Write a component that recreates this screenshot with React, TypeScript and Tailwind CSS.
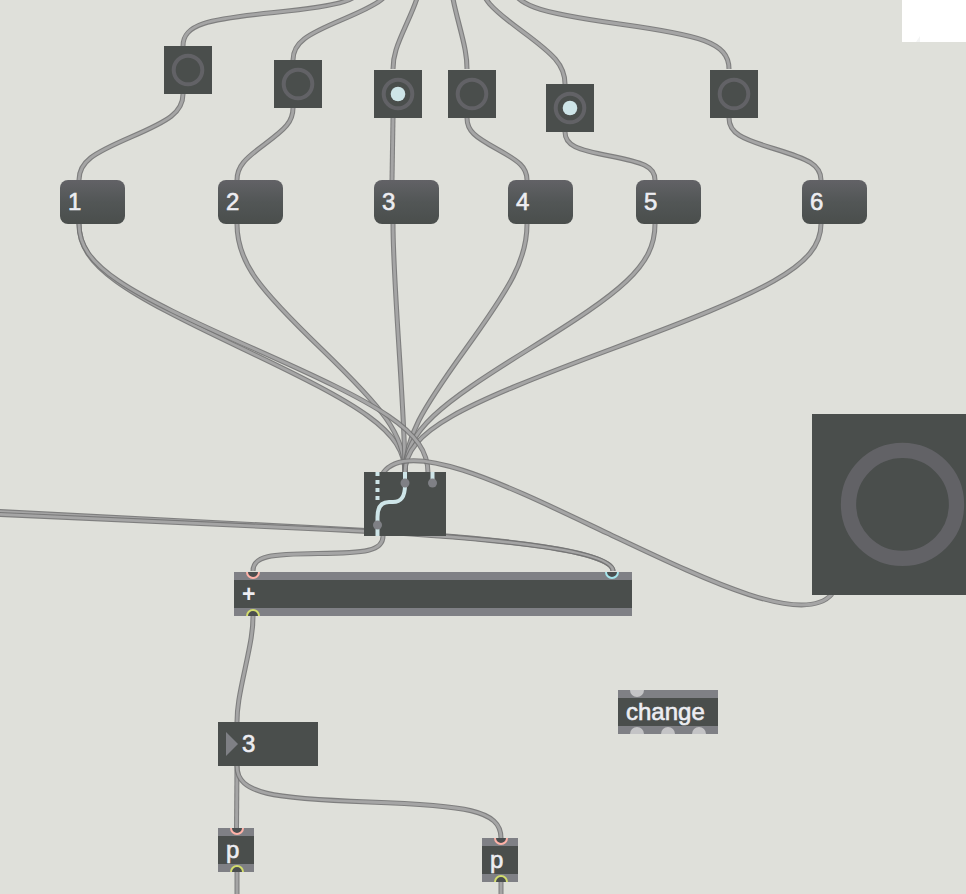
type Point = [number, number];

// Patch cords leave and enter vertically, rounding a corner toward their midpoint.
function cord([x0, y0]: Point, [x1, y1]: Point) {
  const sag = Math.min(47, 3 + 0.077 * Math.abs(x1 - x0) + 0.11 * (y1 - y0));
  const mx = (x0 + x1) / 2;
  const my = (y0 + y1) / 2;
  const handle = sag * 0.9;
  const bend = 0.27;
  const bx = (mx - x0) * bend;
  const by = sag + (my - y0 - sag) * bend;
  return `M${x0} ${y0} C${x0} ${y0 + handle} ${x0 + bx} ${y0 + by} ${mx} ${my} C${x1 - bx} ${y1 - by} ${x1} ${y1 - handle} ${x1} ${y1}`;
}

const cords: string[] = [
  cord([365, -21], [183, 46]),
  cord([392, -21], [293, 60]),
  cord([420, -21], [393, 69]),
  cord([451, -21], [467, 69]),
  cord([480, -21], [565, 84]),
  cord([510, -21], [729, 69]),
  cord([183, 94], [79, 180]),
  cord([293, 108], [237, 180]),
  "M393 118 L392 180",
  cord([467, 118], [527, 180]),
  cord([565, 132], [655, 180]),
  cord([729, 118], [821, 180]),
  cord([79, 224], [405, 473]),
  cord([237, 224], [405, 473]),
  cord([393, 224], [405, 473]),
  cord([527, 224], [405, 473]),
  cord([655, 224], [405, 473]),
  cord([821, 224], [405, 473]),
  cord([79, 224], [428, 473]),
  "M832 594 C803 628 700 577 607 533 S409 436 383 473",
  "M-20 510.5 L330 528.5 Q613 543 613 571",
  "M-20 513.5 L330 529.5 Q613 543 613 571",
  cord([383, 536], [253, 571]),
  cord([253, 616], [237, 722]),
  "M237 766 L236.5 828",
  cord([237, 766], [501, 838]),
  "M237 872 V900",
  "M501 882 V900",
];

function Cords() {
  return (
    <svg className="absolute inset-0" width="966" height="894" fill="none">
      {cords.map((d, i) => (
        <g key={i}>
          <path d={d} stroke="#747474" strokeWidth="5" strokeOpacity="0.9" />
          <path d={d} stroke="#a8a8a8" strokeWidth="2.8" strokeOpacity="0.95" />
        </g>
      ))}
    </svg>
  );
}

function Bang({ place, lit = false }: { place: string; lit?: boolean }) {
  return (
    <div className={`absolute size-12 bg-[#4a4e4c] ${place}`}>
      <svg className="block size-12" fill="none">
        <circle cx="24" cy="24" r="14.3" stroke="#626266" strokeWidth="4" />
        {lit && <circle cx="24" cy="24" r="7.3" fill="#cee5e8" />}
      </svg>
    </div>
  );
}

function Message({ place, text }: { place: string; text: string }) {
  return (
    <div
      className={`absolute flex h-11 w-[65px] items-center rounded-[8px] bg-linear-to-b from-[#626266] via-[#525656] to-[#4a4e4c] pl-2 ${place}`}
    >
      {text}
    </div>
  );
}

const portColors = { hot: "#ffb2a8", cold: "#a5e5ec", out: "#d3dd6c", idle: "#c4c4c6" };

function Port({ x, y, kind }: { x: number; y: number; kind: keyof typeof portColors }) {
  const idle = kind === "idle";
  return (
    <circle
      cx={x}
      cy={y}
      r={idle ? 7 : 6}
      fill={idle ? portColors.idle : "#4a4e4f"}
      stroke={idle ? "none" : portColors[kind]}
      strokeWidth="2"
    />
  );
}

type Ports = { x: number; kind: keyof typeof portColors }[];

type BoxProps = { place: string; text: string; textStyle?: string; inlets: Ports; outlets: Ports };

function Box({ place, text, textStyle = "", inlets, outlets }: BoxProps) {
  return (
    <div className={`absolute flex h-11 flex-col bg-[#4a4e4c] ${place}`}>
      <svg className="block h-2 w-full shrink-0 bg-[#7f8085]">
        {inlets.map((p) => (
          <Port key={p.x} x={p.x} y={0} kind={p.kind} />
        ))}
      </svg>
      <div className={`flex h-7 items-center pl-2 ${textStyle}`}>{text}</div>
      <svg className="block h-2 w-full shrink-0 bg-[#7f8085]">
        {outlets.map((p) => (
          <Port key={p.x} x={p.x} y={8} kind={p.kind} />
        ))}
      </svg>
    </div>
  );
}

function Switch() {
  return (
    <svg className="absolute top-[472px] left-[364px] bg-[#4a4e4c]" width="82" height="64" fill="none">
      <path d="M13.5 0 V28" stroke="#cee5e8" strokeWidth="4" strokeDasharray="4 4" />
      <path d="M41 0 V13 C41 25 37 30 29 30 H25 C17 30 13.5 35 13.5 45 V64" stroke="#cee5e8" strokeWidth="4" />
      <path d="M68.5 0 V10" stroke="#cee5e8" strokeWidth="4" />
      <circle cx="41" cy="11" r="4.5" fill="#7f8085" />
      <circle cx="68.5" cy="11" r="4.5" fill="#7f8085" />
      <circle cx="13.5" cy="53" r="4.5" fill="#7f8085" />
    </svg>
  );
}

export default function App() {
  return (
    <main className="relative h-[894px] w-[966px] overflow-hidden bg-[#dfe0da] font-['Liberation_Sans',Arial,sans-serif] text-[24px] leading-none text-[#ededf2] [-webkit-text-stroke:0.6px_#ededf2]">
      <Cords />

      <div className="absolute top-0 left-[902px] h-[42px] w-16 bg-white">
        <svg className="absolute bottom-0 left-3.5" width="4" height="6">
          <path d="M4 0 V6 H0 Z" fill="#f4f5f5" />
        </svg>
      </div>

      <Bang place="left-[164px] top-[46px]" />
      <Bang place="left-[274px] top-[60px]" />
      <Bang place="left-[374px] top-[70px]" lit />
      <Bang place="left-[448px] top-[70px]" />
      <Bang place="left-[546px] top-[84px]" lit />
      <Bang place="left-[710px] top-[70px]" />

      <Message place="left-[60px] top-[180px]" text="1" />
      <Message place="left-[218px] top-[180px]" text="2" />
      <Message place="left-[374px] top-[180px]" text="3" />
      <Message place="left-[508px] top-[180px]" text="4" />
      <Message place="left-[636px] top-[180px]" text="5" />
      <Message place="left-[802px] top-[180px]" text="6" />

      <Switch />

      <div className="absolute top-[414px] left-[812px] h-[181px] w-[181px] bg-[#4a4e4c]">
        <svg className="block size-full" fill="none">
          <circle cx="90.5" cy="90.4" r="54" stroke="#626266" strokeWidth="15.3" />
        </svg>
      </div>

      <Box
        place="left-[234px] top-[572px] w-[398px]"
        text="+"
        textStyle="text-[23px] font-bold [-webkit-text-stroke:0px]"
        inlets={[
          { x: 19, kind: "hot" },
          { x: 378, kind: "cold" },
        ]}
        outlets={[{ x: 19, kind: "out" }]}
      />
      <Box
        place="left-[618px] top-[690px] w-[100px]"
        text="change"
        inlets={[{ x: 19, kind: "idle" }]}
        outlets={[
          { x: 19, kind: "idle" },
          { x: 50, kind: "idle" },
          { x: 81, kind: "idle" },
        ]}
      />

      <div className="absolute top-[722px] left-[218px] flex h-11 w-[100px] items-center gap-1 bg-[#4a4e4c] pl-2">
        <svg width="12" height="24">
          <path d="M0 0 L12 12 L0 24 Z" fill="#7f8085" />
        </svg>
        <span>3</span>
      </div>

      <Box
        place="left-[218px] top-[828px] w-9"
        text="p"
        inlets={[{ x: 19, kind: "hot" }]}
        outlets={[{ x: 19, kind: "out" }]}
      />
      <Box
        place="left-[482px] top-[838px] w-9"
        text="p"
        inlets={[{ x: 19, kind: "hot" }]}
        outlets={[{ x: 19, kind: "out" }]}
      />
    </main>
  );
}
